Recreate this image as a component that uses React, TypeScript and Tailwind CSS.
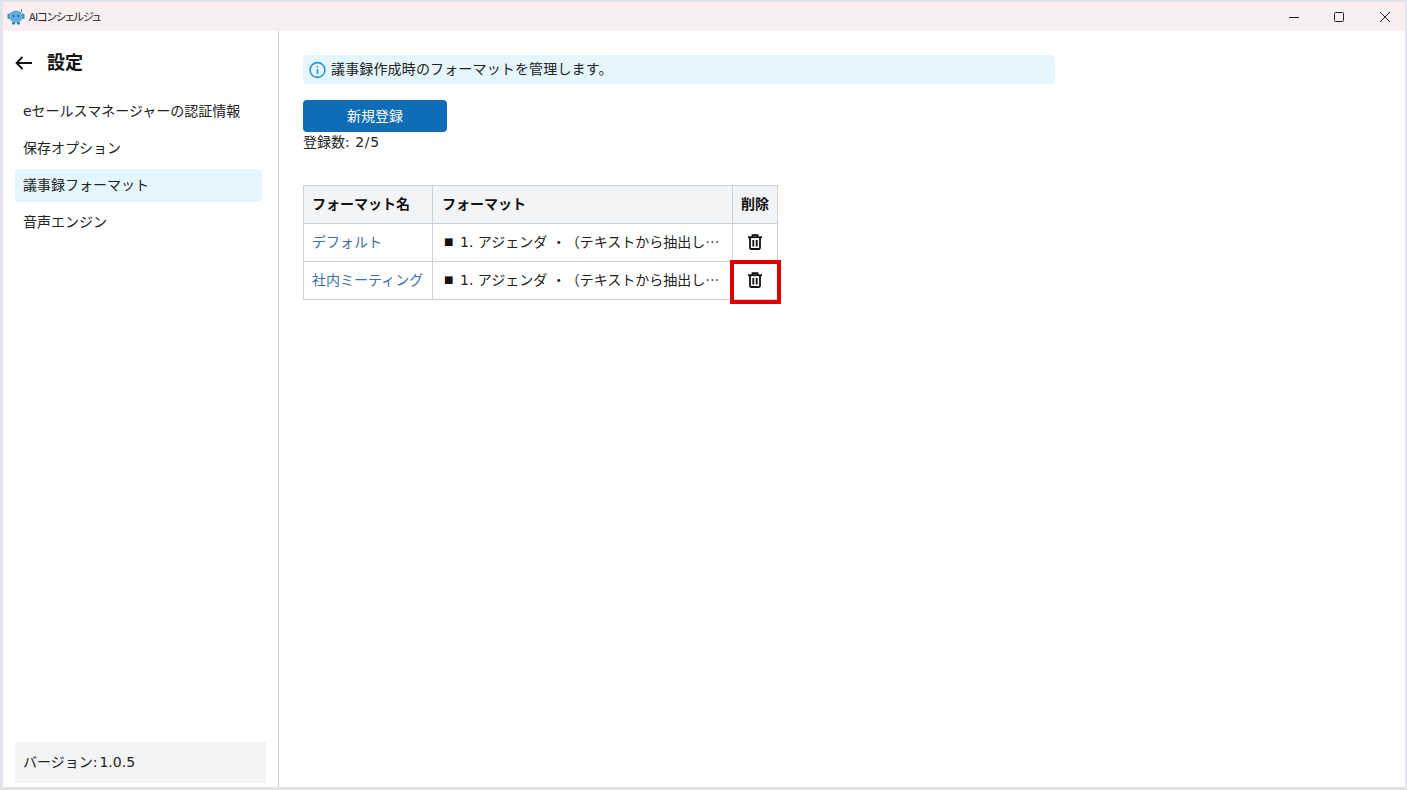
import React from "react";

function Robot() {
  return (
    <svg width="18" height="16" viewBox="0 0 18 16">
      <rect x="0.5" y="4.5" width="3" height="5.5" rx="1.2" fill="#3f8fc0" />
      <rect x="14.5" y="4.5" width="3" height="5.5" rx="1.2" fill="#3f8fc0" />
      <ellipse cx="9" cy="7.5" rx="7" ry="6" fill="#62aedb" />
      <circle cx="6.6" cy="7" r="1" fill="#1d5d8c" />
      <circle cx="11.4" cy="7" r="1" fill="#1d5d8c" />
      <rect x="5" y="13" width="3.2" height="2.5" rx="1" fill="#2f7fb3" />
      <rect x="9.8" y="13" width="3.2" height="2.5" rx="1" fill="#2f7fb3" />
      <rect x="14" y="0" width="1" height="3" fill="#d9607a" />
    </svg>
  );
}

function Trash() {
  return (
    <svg width="16" height="16" viewBox="0 0 16 16" fill="none" stroke="#111" strokeWidth="1.8">
      <path d="M1 3.2h14" />
      <path d="M5.5 3V1.2h5V3" />
      <path d="M3 3.2v10.6a1.2 1.2 0 0 0 1.2 1.2h7.6a1.2 1.2 0 0 0 1.2-1.2V3.2" />
      <path d="M6.3 6v6.4M9.7 6v6.4" />
    </svg>
  );
}

function Row({ name, last }: { name: string; last?: boolean }) {
  return (
    <tr className="h-[38px]">
      <td className="border border-[#c8d1dc] px-2 text-[#3b6fa5] whitespace-nowrap leading-[20px] pb-[2px]">{name}</td>
      <td className="border border-[#c8d1dc] pl-[11px] pr-0 leading-[20px] pb-[2px]">
        <div className="flex items-center whitespace-nowrap text-[#222]">
          <span className="w-[16px] shrink-0 text-[10px] text-[#111]">■</span>
          <span className="[text-spacing-trim:space-all]">1. アジェンダ ・（テキストから抽出し<span className="font-['Noto_Sans_CJK_JP',sans-serif]">…</span></span>
        </div>
      </td>
      <td className="border border-[#c8d1dc] relative pb-[2px]">
        <div className="flex justify-center pr-[1px]"><Trash /></div>
        {last && <div className="absolute left-[-3px] top-[-2px] w-[51px] h-[44px] border-[4px] border-[#dd0000]" />}
      </td>
    </tr>
  );
}

export default function App() {
  return (
    <div className="h-[790px] w-[1407px] flex flex-col border-[3px] border-t-[2px] border-r-[2px] border-[#e1e5ea] bg-white text-[14px] text-[#222] overflow-hidden font-['DejaVu_Sans','Noto_Sans_CJK_JP',sans-serif]">
      <div className="h-[29px] shrink-0 bg-[#f9eff1] flex items-center pl-[4px] text-[#222]">
        <Robot />
        <span className="ml-[4px] text-[11px] tracking-[-0.8px] [font-feature-settings:'palt'] font-['Noto_Sans_CJK_JP',sans-serif]">AIコンシェルジュ</span>
        <div className="ml-auto flex items-center text-[#222]">
          <svg width="12" height="12" viewBox="0 0 12 12" className="mr-[33px]" stroke="#222"><path d="M1 6.5h10" /></svg>
          <svg width="12" height="12" viewBox="0 0 12 12" className="mr-[34px]" fill="none" stroke="#222"><rect x="1.5" y="1.5" width="9" height="9" rx="1" /></svg>
          <svg width="12" height="12" viewBox="0 0 12 12" className="mr-[14px]" stroke="#222"><path d="M1 1l10 10M11 1L1 11" /></svg>
        </div>
      </div>
      <div className="flex flex-1 min-h-0">
        <aside className="w-[276px] shrink-0 border-r border-[#c8d1dc] flex flex-col pl-3 pr-3 pb-[4px]">
          <div className="flex items-center h-[24px] mt-[20px]">
            <svg width="17" height="14" viewBox="0 0 17 14" fill="none" stroke="#111" strokeWidth="1.8"><path d="M17 7H1.5M7.5 1L1.5 7l6 6" /></svg>
            <span className="ml-[15px] text-[18px] leading-[24px] font-bold text-[#111]">設定</span>
          </div>
          <nav className="mt-[20px] flex flex-col gap-[4px] w-[247px]">
            <div className="h-[33px] flex items-center pl-2 leading-[20px] pb-[1px]">eセールスマネージャーの認証情報</div>
            <div className="h-[33px] flex items-center pl-2 leading-[20px] pb-[1px]">保存オプション</div>
            <div className="h-[33px] flex items-center pl-2 leading-[20px] pb-[1px] bg-[#e6f6fe] rounded">議事録フォーマット</div>
            <div className="h-[33px] flex items-center pl-2 leading-[20px] pb-[1px]">音声エンジン</div>
          </nav>
          <div className="mt-auto h-[41px] flex items-center pl-2 leading-[20px] pb-[1px] bg-[#f3f4f6] whitespace-pre">バージョン:<span className="ml-[2px]">1.0.5</span></div>
        </aside>
        <main className="flex-1 pl-6 pt-6">
          <div className="w-[752px] h-[29px] bg-[#e6f6fe] rounded flex items-center pl-[5px]">
            <svg width="18" height="18" viewBox="0 0 18 18" fill="none" stroke="#2196e0" strokeWidth="1.6">
              <circle cx="9.5" cy="9" r="7.4" />
              <path d="M9.5 8v5" />
              <path d="M9.5 5v1.4" />
            </svg>
            <span className="ml-[5px] leading-[20px] pb-[1px] tracking-[0.15px]">議事録作成時のフォーマットを管理します。</span>
          </div>
          <button className="mt-[16px] block w-[144px] h-[32px] rounded bg-[#0f6cb6] text-white leading-[20px]">新規登録</button>
          <div className="h-[20px] leading-[20px]">登録数: <span className="ml-[1px] tracking-[0.7px]">2/5</span></div>
          <table className="mt-[33px] border-collapse table-fixed w-[474px]">
            <colgroup>
              <col className="w-[129px]" />
              <col className="w-[300px]" />
              <col className="w-[45px]" />
            </colgroup>
            <thead>
              <tr className="h-[38px] bg-[#f3f4f6] text-[#111]">
                <th className="border border-[#c8d1dc] px-2 text-left font-bold leading-[20px] pb-[2px]">フォーマット名</th>
                <th className="border border-[#c8d1dc] pl-[9px] text-left font-bold leading-[20px] pb-[2px]">フォーマット</th>
                <th className="border border-[#c8d1dc] text-center font-bold text-[14px] leading-[20px] pb-[2px]">削除</th>
              </tr>
            </thead>
            <tbody>
              <Row name="デフォルト" />
              <Row name="社内ミーティング" last />
            </tbody>
          </table>
        </main>
      </div>
    </div>
  );
}
